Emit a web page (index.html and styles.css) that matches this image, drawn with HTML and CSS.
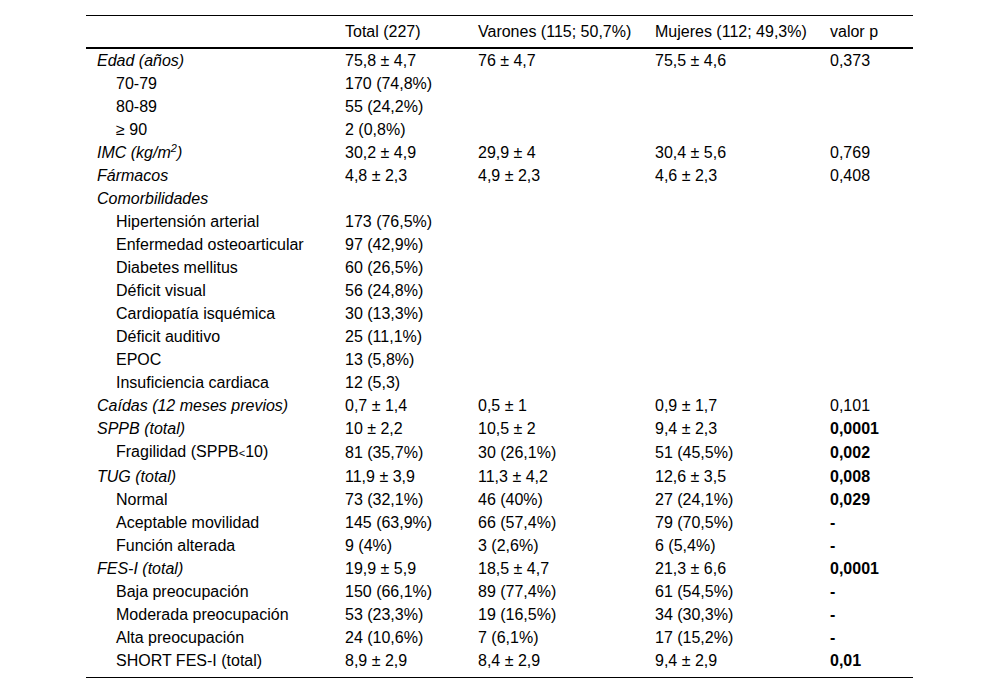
FILE: index.html
```html
<!DOCTYPE html>
<html lang="es">
<head>
<meta charset="utf-8">
<title>Tabla</title>
<link rel="stylesheet" href="styles.css">
</head>
<body>
<div class="wrap">
<table class="data">
<colgroup>
<col class="c1"><col class="c2"><col class="c3"><col class="c4"><col class="c5">
</colgroup>
<thead>
<tr><th></th><th>Total (227)</th><th>Varones (115; 50,7%)</th><th>Mujeres (112; 49,3%)</th><th>valor p</th></tr>
</thead>
<tbody>
<tr><td class="it">Edad (años)</td><td>75,8 ± 4,7</td><td>76 ± 4,7</td><td>75,5 ± 4,6</td><td>0,373</td></tr>
<tr><td class="sub">70-79</td><td>170 (74,8%)</td><td></td><td></td><td></td></tr>
<tr><td class="sub">80-89</td><td>55 (24,2%)</td><td></td><td></td><td></td></tr>
<tr><td class="sub">≥ 90</td><td>2 (0,8%)</td><td></td><td></td><td></td></tr>
<tr><td class="it">IMC (kg/m<sup>2</sup>)</td><td>30,2 ± 4,9</td><td>29,9 ± 4</td><td>30,4 ± 5,6</td><td>0,769</td></tr>
<tr><td class="it">Fármacos</td><td>4,8 ± 2,3</td><td>4,9 ± 2,3</td><td>4,6 ± 2,3</td><td>0,408</td></tr>
<tr><td class="it">Comorbilidades</td><td></td><td></td><td></td><td></td></tr>
<tr><td class="sub">Hipertensión arterial</td><td>173 (76,5%)</td><td></td><td></td><td></td></tr>
<tr><td class="sub">Enfermedad osteoarticular</td><td>97 (42,9%)</td><td></td><td></td><td></td></tr>
<tr><td class="sub">Diabetes mellitus</td><td>60 (26,5%)</td><td></td><td></td><td></td></tr>
<tr><td class="sub">Déficit visual</td><td>56 (24,8%)</td><td></td><td></td><td></td></tr>
<tr><td class="sub">Cardiopatía isquémica</td><td>30 (13,3%)</td><td></td><td></td><td></td></tr>
<tr><td class="sub">Déficit auditivo</td><td>25 (11,1%)</td><td></td><td></td><td></td></tr>
<tr><td class="sub">EPOC</td><td>13 (5,8%)</td><td></td><td></td><td></td></tr>
<tr><td class="sub">Insuficiencia cardiaca</td><td>12 (5,3)</td><td></td><td></td><td></td></tr>
<tr><td class="it">Caídas (12 meses previos)</td><td>0,7 ± 1,4</td><td>0,5 ± 1</td><td>0,9 ± 1,7</td><td>0,101</td></tr>
<tr><td class="it">SPPB (total)</td><td>10 ± 2,2</td><td>10,5 ± 2</td><td>9,4 ± 2,3</td><td class="b">0,0001</td></tr>
<tr><td class="sub">Fragilidad (SPPB<span class="sm">&lt;</span>10)</td><td>81 (35,7%)</td><td>30 (26,1%)</td><td>51 (45,5%)</td><td class="b">0,002</td></tr>
<tr><td class="it">TUG (total)</td><td>11,9 ± 3,9</td><td>11,3 ± 4,2</td><td>12,6 ± 3,5</td><td class="b">0,008</td></tr>
<tr><td class="sub">Normal</td><td>73 (32,1%)</td><td>46 (40%)</td><td>27 (24,1%)</td><td class="b">0,029</td></tr>
<tr><td class="sub">Aceptable movilidad</td><td>145 (63,9%)</td><td>66 (57,4%)</td><td>79 (70,5%)</td><td class="b">-</td></tr>
<tr><td class="sub">Función alterada</td><td>9 (4%)</td><td>3 (2,6%)</td><td>6 (5,4%)</td><td class="b">-</td></tr>
<tr><td class="it">FES-I (total)</td><td>19,9 ± 5,9</td><td>18,5 ± 4,7</td><td>21,3 ± 6,6</td><td class="b">0,0001</td></tr>
<tr><td class="sub">Baja preocupación</td><td>150 (66,1%)</td><td>89 (77,4%)</td><td>61 (54,5%)</td><td class="b">-</td></tr>
<tr><td class="sub">Moderada preocupación</td><td>53 (23,3%)</td><td>19 (16,5%)</td><td>34 (30,3%)</td><td class="b">-</td></tr>
<tr><td class="sub">Alta preocupación</td><td>24 (10,6%)</td><td>7 (6,1%)</td><td>17 (15,2%)</td><td class="b">-</td></tr>
<tr class="last"><td class="sub">SHORT FES-I (total)</td><td>8,9 ± 2,9</td><td>8,4 ± 2,9</td><td>9,4 ± 2,9</td><td class="b">0,01</td></tr>
</tbody>
</table>
</div>
</body>
</html>
```

FILE: styles.css
```css
html, body {
  margin: 0;
  padding: 0;
  background: #fff;
}
body {
  font-family: "Liberation Sans", Arial, sans-serif;
  font-size: 16px;
  color: #000;
}
.wrap {
  padding: 15px 0 0 86px;
}
.data {
  width: 827px;
  border-collapse: collapse;
  table-layout: fixed;
}
.c1 { width: 248px; }
.c2 { width: 133px; }
.c3 { width: 177px; }
.c4 { width: 175px; }
.c5 { width: 94px; }
.data thead tr {
  border-top: 1px solid #000;
  border-bottom: 2px solid #000;
}
.data th {
  font-weight: normal;
  text-align: left;
  line-height: 17px;
  padding: 7px 0 7px 11px;
}
.data td {
  line-height: 17px;
  padding: 3px 0 3px 11px;
  text-align: left;
  white-space: nowrap;
  vertical-align: middle;
}
.data tr.last {
  border-bottom: 1px solid #000;
}
.data tr.last td {
  padding-bottom: 8px;
}
.it { font-style: italic; }
.data td.sub { padding-left: 30px; }
.b { font-weight: bold; }
sup {
  font-size: 11px;
  line-height: 0;
  vertical-align: 6px;
}
.sm {
  font-size: 11px;
}
```
